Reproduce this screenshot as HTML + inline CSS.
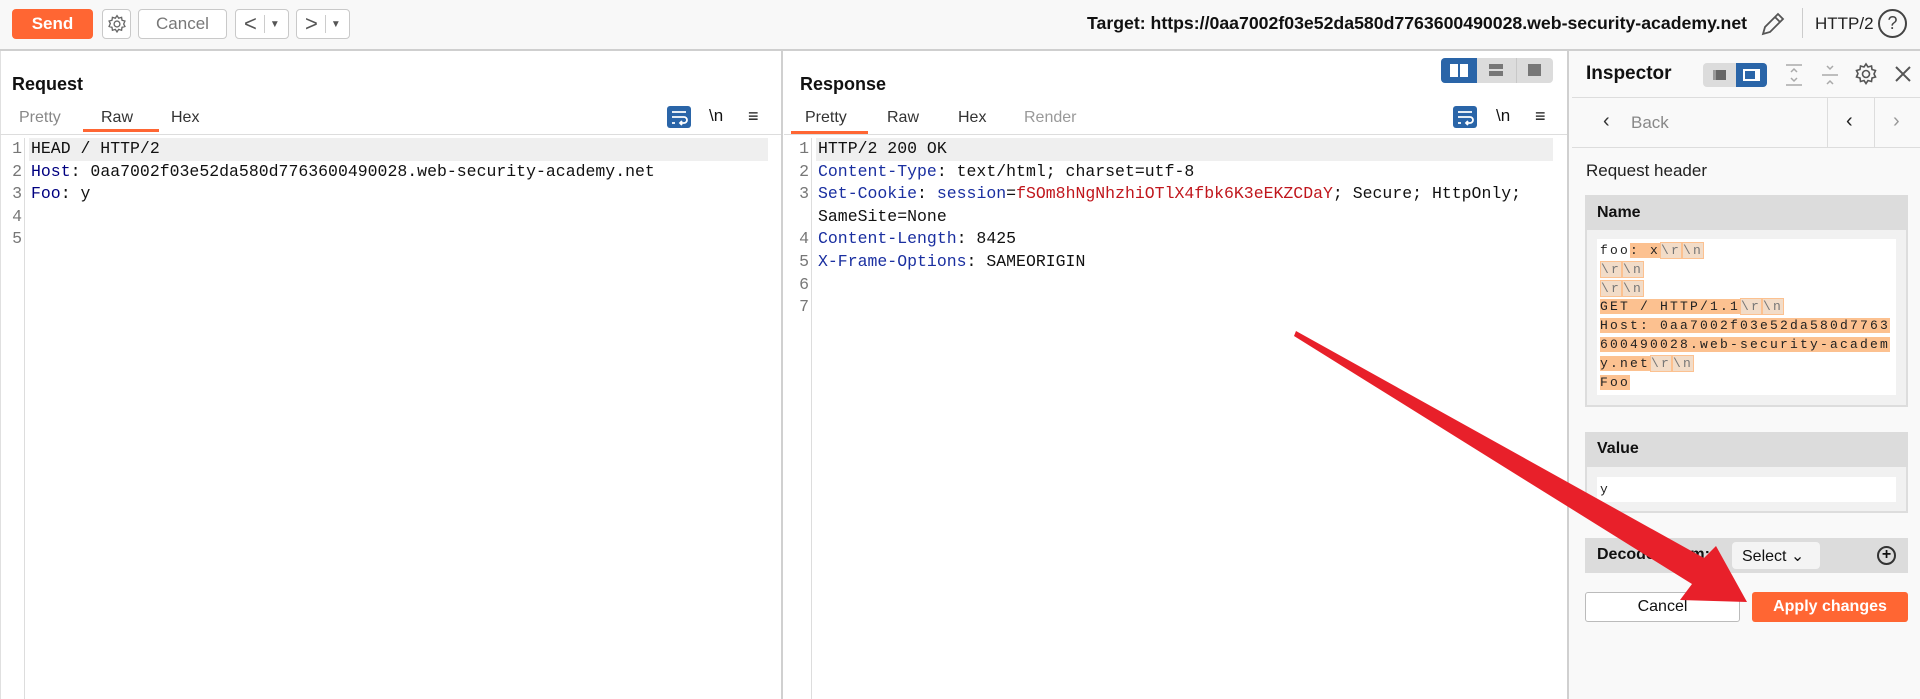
<!DOCTYPE html>
<html><head><meta charset="utf-8"><style>
*{box-sizing:border-box;margin:0;padding:0}
body{width:1920px;height:699px;overflow:hidden;background:#fff;font-family:"Liberation Sans",sans-serif;color:#111;position:relative}
.a{position:absolute}
.btn{position:absolute;border:1px solid #c9c9c9;border-radius:4px;background:#fff;display:flex;align-items:center;justify-content:center;font-size:17px;color:#777}
.code{font-family:"Liberation Mono",monospace;font-size:16.5px;white-space:pre;line-height:22.6px}
.ln{color:#777;text-align:right}
.k{color:#1a2fa0}.r{color:#c0161c}
.tab{position:absolute;font-size:16px;color:#333;top:109px}
.mono2{font-family:"Liberation Mono",monospace;font-size:13px;letter-spacing:2.2px;white-space:pre;line-height:18.8px;color:#222}
.hl{background:#fcc190}
.esc{background:#f2dcc8;color:#777;border:1px solid #fcc190}
</style></head><body>
<!-- top bar -->
<div class="a" style="left:0;top:0;width:1920px;height:51px;background:#f8f8f8;border-bottom:2px solid #cfcfcf"></div>
<div class="a" style="left:12px;top:9px;width:81px;height:30px;background:#ff6633;border-radius:4px;color:#fff;font-weight:bold;font-size:17px;display:flex;align-items:center;justify-content:center">Send</div>
<div class="btn" style="left:102px;top:9px;width:29px;height:30px"><svg width="20" height="20" viewBox="0 0 24 24" fill="none" stroke="#666" stroke-width="1.6"><circle cx="12" cy="12" r="3.5"/><path d="M12 2l2 3 3.5-1 .5 3.5 3.5 1-1.5 3.5 1.5 3-3.5 1-.5 3.5-3.5-1-2 3-2-3-3.5 1-.5-3.5-3.5-1 1.5-3.5-1.5-3 3.5-1 .5-3.5 3.5 1z"/></svg></div>
<div class="btn" style="left:138px;top:9px;width:89px;height:30px">Cancel</div>
<div class="btn" style="left:235px;top:9px;width:54px;height:30px;justify-content:flex-start;padding-left:8px;color:#555"><span style="font-size:22px">&lt;</span><span style="border-left:1px solid #ccc;height:18px;margin:0 5px 0 7px"></span><span style="font-size:10px">▼</span></div>
<div class="btn" style="left:296px;top:9px;width:54px;height:30px;justify-content:flex-start;padding-left:8px;color:#555"><span style="font-size:22px">&gt;</span><span style="border-left:1px solid #ccc;height:18px;margin:0 5px 0 7px"></span><span style="font-size:10px">▼</span></div>
<div class="a" style="left:1087px;top:13px;font-weight:bold;font-size:17.7px;color:#111;white-space:nowrap">Target: https://0aa7002f03e52da580d7763600490028.web-security-academy.net</div>
<svg class="a" style="left:1758px;top:9px" width="30" height="30" viewBox="0 0 30 30" fill="none" stroke="#555" stroke-width="1.8"><path d="M5 25l2-7L20 5l5 5-13 13z M17 8l5 5"/></svg>
<div class="a" style="left:1802px;top:8px;width:1px;height:30px;background:#ccc"></div>
<div class="a" style="left:1815px;top:14px;font-size:17px;color:#222">HTTP/2</div>
<div class="a" style="left:1878px;top:9px;width:29px;height:29px;border:2px solid #444;border-radius:50%;text-align:center;font-size:18px;line-height:25px;color:#444">?</div>

<!-- dividers -->
<div class="a" style="left:781px;top:51px;width:2px;height:648px;background:#d0d0d0"></div>
<div class="a" style="left:1567px;top:51px;width:2px;height:648px;background:#d0d0d0"></div>
<div class="a" style="left:0;top:51px;width:1px;height:648px;background:#e0e0e0"></div>

<!-- Request -->
<div class="a" style="left:12px;top:74px;font-weight:bold;font-size:18px">Request</div>
<div class="tab" style="left:19px;color:#888">Pretty</div>
<div class="tab" style="left:101px">Raw</div>
<div class="tab" style="left:171px">Hex</div>
<div class="a" style="left:83px;top:129px;width:76px;height:3px;background:#ff6633"></div>
<div class="a" style="left:0;top:134px;width:781px;height:1px;background:#ddd"></div>
<div class="a" style="left:667px;top:106px;width:24px;height:22px;background:#2a65a8;border-radius:3px"><svg width="24" height="22" viewBox="0 0 24 22" fill="none" stroke="#fff" stroke-width="1.8"><path d="M5 6h14M5 11h12a3 3 0 0 1 0 6h-4M15 15l-2 2 2 2M5 17h3"/></svg></div>
<div class="a" style="left:709px;top:106px;font-size:17px">\n</div>
<div class="a" style="left:748px;top:106px;font-size:18px;font-weight:bold">≡</div>
<div class="a" style="left:29px;top:138px;width:739px;height:23px;background:#efefef"></div>
<div class="a" style="left:24px;top:138px;width:1px;height:561px;background:#ddd"></div>
<div class="a code ln" style="left:4px;top:138px;width:18px">1
2
3
4
5</div>
<div class="a code" style="left:31px;top:138px">HEAD / HTTP/2
<span style="color:#000080">Host</span>: 0aa7002f03e52da580d7763600490028.web-security-academy.net
<span style="color:#000080">Foo</span>: y</div>

<!-- Response -->
<div class="a" style="left:800px;top:74px;font-weight:bold;font-size:18px">Response</div>
<div class="a" style="left:1441px;top:58px;width:112px;height:25px;background:#dcdcdc;border-radius:4px"></div>
<div class="a" style="left:1441px;top:58px;width:36px;height:25px;background:#2a65a8;border-radius:4px 0 0 4px"></div>
<div class="a" style="left:1450px;top:64px;width:8px;height:13px;background:#fff"></div>
<div class="a" style="left:1460px;top:64px;width:8px;height:13px;background:#fff"></div>
<div class="a" style="left:1489px;top:64px;width:14px;height:5px;background:#777"></div>
<div class="a" style="left:1489px;top:71px;width:14px;height:5px;background:#777"></div>
<div class="a" style="left:1516px;top:58px;width:1px;height:25px;background:#c8c8c8"></div>
<div class="a" style="left:1528px;top:64px;width:13px;height:12px;background:#777"></div>
<div class="tab" style="left:805px">Pretty</div>
<div class="tab" style="left:887px">Raw</div>
<div class="tab" style="left:958px">Hex</div>
<div class="tab" style="left:1024px;color:#999">Render</div>
<div class="a" style="left:791px;top:131px;width:77px;height:3px;background:#ff6633"></div>
<div class="a" style="left:784px;top:134px;width:783px;height:1px;background:#ddd"></div>
<div class="a" style="left:1453px;top:106px;width:24px;height:22px;background:#2a65a8;border-radius:3px"><svg width="24" height="22" viewBox="0 0 24 22" fill="none" stroke="#fff" stroke-width="1.8"><path d="M5 6h14M5 11h12a3 3 0 0 1 0 6h-4M15 15l-2 2 2 2M5 17h3"/></svg></div>
<div class="a" style="left:1496px;top:106px;font-size:17px">\n</div>
<div class="a" style="left:1535px;top:106px;font-size:18px;font-weight:bold">≡</div>
<div class="a" style="left:816px;top:138px;width:737px;height:23px;background:#efefef"></div>
<div class="a" style="left:811px;top:138px;width:1px;height:561px;background:#ddd"></div>
<div class="a code ln" style="left:791px;top:138px;width:18px">1
2
3

4
5
6
7</div>
<div class="a code" style="left:818px;top:138px">HTTP/2 200 OK
<span class="k">Content-Type</span>: text/html; charset=utf-8
<span class="k">Set-Cookie</span>: <span class="k">session</span>=<span class="r">fSOm8hNgNhzhiOTlX4fbk6K3eEKZCDaY</span>; Secure; HttpOnly;
SameSite=None
<span class="k">Content-Length</span>: 8425
<span class="k">X-Frame-Options</span>: SAMEORIGIN</div>

<!-- Inspector -->
<div class="a" style="left:1569px;top:51px;width:351px;height:648px;background:#f9f9f9"></div>
<div class="a" style="left:1586px;top:63px;font-weight:bold;font-size:19px">Inspector</div>
<div class="a" style="left:1703px;top:63px;width:64px;height:24px;background:#dcdcdc;border-radius:4px"></div>
<div class="a" style="left:1736px;top:63px;width:31px;height:24px;background:#2a65a8;border-radius:0 4px 4px 0"></div>
<div class="a" style="left:1713px;top:70px;width:13px;height:10px;background:#666;border-left:3px solid #999"></div>
<div class="a" style="left:1743px;top:69px;width:17px;height:12px;border:2px solid #fff;border-right-width:5px"></div>
<svg class="a" style="left:1783px;top:62px" width="22" height="26" viewBox="0 0 22 26" fill="none" stroke="#aaa" stroke-width="1.5"><path d="M3 3h16M3 23h16M8 10l3-3 3 3M8 16l3 3 3-3"/></svg>
<svg class="a" style="left:1819px;top:62px" width="22" height="26" viewBox="0 0 22 26" fill="none" stroke="#aaa" stroke-width="1.5"><path d="M3 13h16M8 4l3 3 3-3M8 22l3-3 3 3"/></svg>
<svg class="a" style="left:1854px;top:62px" width="24" height="24" viewBox="0 0 24 24" fill="none" stroke="#555" stroke-width="1.6"><circle cx="12" cy="12" r="3.5"/><path d="M12 2l2 3 3.5-1 .5 3.5 3.5 1-1.5 3.5 1.5 3-3.5 1-.5 3.5-3.5-1-2 3-2-3-3.5 1-.5-3.5-3.5-1 1.5-3.5-1.5-3 3.5-1 .5-3.5 3.5 1z"/></svg>
<svg class="a" style="left:1893px;top:64px" width="20" height="20" viewBox="0 0 20 20" stroke="#555" stroke-width="2"><path d="M3 3l14 14M17 3L3 17"/></svg>
<div class="a" style="left:1572px;top:97px;width:348px;height:1px;background:#ddd"></div>
<div class="a" style="left:1572px;top:147px;width:348px;height:1px;background:#ddd"></div>
<div class="a" style="left:1827px;top:97px;width:1px;height:50px;background:#ddd"></div>
<div class="a" style="left:1874px;top:97px;width:1px;height:50px;background:#ddd"></div>
<div class="a" style="left:1603px;top:110px;font-size:20px;color:#333">‹</div>
<div class="a" style="left:1631px;top:113px;font-size:17px;color:#888">Back</div>
<div class="a" style="left:1846px;top:110px;font-size:20px;color:#222">‹</div>
<div class="a" style="left:1893px;top:110px;font-size:20px;color:#999">›</div>
<div class="a" style="left:1586px;top:161px;font-size:17px;color:#222">Request header</div>

<div class="a" style="left:1585px;top:195px;width:323px;height:212px;background:#f1f1f1;border:2px solid #ddd"></div>
<div class="a" style="left:1585px;top:195px;width:323px;height:35px;background:#dcdcdc"></div>
<div class="a" style="left:1597px;top:204px;font-weight:bold;font-size:16px">Name</div>
<div class="a" style="left:1597px;top:239px;width:299px;height:156px;background:#fff"></div>
<div class="a mono2" style="left:1600px;top:242px">foo<span class="hl">: x<span class="esc">\r</span><span class="esc">\n</span></span>
<span class="hl"><span class="esc">\r</span><span class="esc">\n</span></span>
<span class="hl"><span class="esc">\r</span><span class="esc">\n</span></span>
<span class="hl">GET / HTTP/1.1<span class="esc">\r</span><span class="esc">\n</span></span>
<span class="hl">Host: 0aa7002f03e52da580d7763</span>
<span class="hl">600490028.web-security-academ</span>
<span class="hl">y.net<span class="esc">\r</span><span class="esc">\n</span></span>
<span class="hl">Foo</span></div>

<div class="a" style="left:1585px;top:432px;width:323px;height:81px;background:#f1f1f1;border:2px solid #ddd"></div>
<div class="a" style="left:1585px;top:432px;width:323px;height:35px;background:#dcdcdc"></div>
<div class="a" style="left:1597px;top:440px;font-weight:bold;font-size:16px">Value</div>
<div class="a" style="left:1597px;top:477px;width:299px;height:25px;background:#fff"></div>
<div class="a mono2" style="left:1600px;top:481px">y</div>

<div class="a" style="left:1585px;top:538px;width:323px;height:35px;background:#dcdcdc"></div>
<div class="a" style="left:1597px;top:546px;font-weight:bold;font-size:16px">Decoded from:</div>
<div class="a" style="left:1732px;top:542px;width:88px;height:27px;background:#f4f4f4;border-radius:4px;font-size:16px;padding:4px 0 0 10px">Select ⌄</div>
<div class="a" style="left:1877px;top:546px;width:19px;height:19px;border:2px solid #333;border-radius:50%;text-align:center;font-size:16px;line-height:14px;font-weight:bold">+</div>

<div class="a" style="left:1585px;top:592px;width:155px;height:30px;background:#fff;border:1px solid #bbb;border-radius:3px;text-align:center;font-size:16px;line-height:28px">Cancel</div>
<div class="a" style="left:1752px;top:592px;width:156px;height:30px;background:#ff6633;border-radius:3px;text-align:center;font-size:16px;line-height:30px;color:#fff;font-weight:bold">Apply changes</div>

<!-- red arrow -->
<svg class="a" style="left:0;top:0" width="1920" height="699"><polygon fill="#e8202a" points="1296,331 1704,558 1716,546 1747,602 1680,600 1692,584 1294,336" /></svg>
</body></html>
